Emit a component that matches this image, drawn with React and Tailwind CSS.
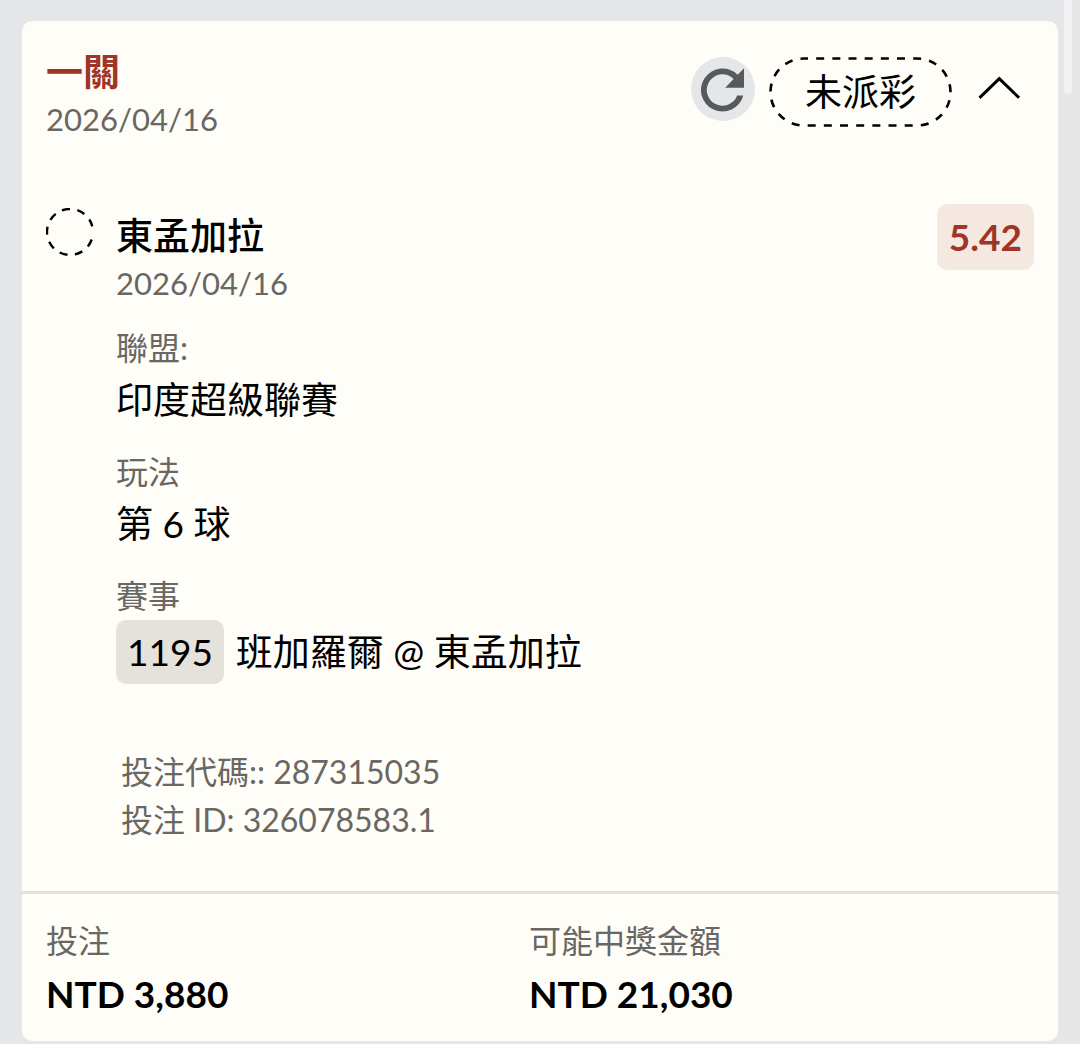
import React, { useState } from "react";

const fields = [
  { label: "聯盟:", value: "印度超級聯賽" },
  { label: "玩法", value: "第 6 球" },
];

const Field = ({ label, children }) => (
  <div className="mb-5">
    <dt className="text-[32px] leading-[48px] text-[#686764]">{label}</dt>
    <dd className="text-[37px] leading-[56px] text-black">{children}</dd>
  </div>
);

const Amount = ({ label, value }) => (
  <div>
    <dt className="text-[32px] leading-[48px] text-[#686764]">{label}</dt>
    <dd className="text-[37px] leading-[58px] font-bold text-black">{value}</dd>
  </div>
);

const App = () => {
  const [open, setOpen] = useState(true);

  return (
    <div className="relative min-h-screen bg-[#e5e6e8] px-[22px] pt-[21px] pb-[3px] font-[Lato,'Noto_Sans_CJK_TC',sans-serif]">
      {/* scrollbar thumb */}
      <div className="absolute top-0 right-2 h-[94px] w-2 rounded-b-full bg-[#f1f1f3]" />

      <article className="overflow-hidden rounded-[10px] bg-[#fffdf7]">
        <header className="flex items-start justify-between px-6 pt-[27px]">
          <div>
            <h1 className="text-[37px] leading-[48px] font-bold text-[#a03527]">一關</h1>
            <time className="block text-[31px] leading-[46px] text-[#686764]">2026/04/16</time>
          </div>
          <div className="flex items-start gap-[14px] pt-[9px]">
            <button
              type="button"
              aria-label="重新整理"
              className="h-16 w-16 rounded-full bg-[#e5e6e8]"
            >
              <svg viewBox="0 0 64 64" className="h-16 w-16" fill="#58595b">
                <path d="M52.3 38.5A21.5 21.5 0 1 1 46.7 17.8L53 11.3V30.7H34.3L42.6 21.9A15.7 15.7 0 1 0 46.2 38.5Z" />
              </svg>
            </button>
            <span className="relative flex h-[70px] w-[183px] items-center justify-center text-[37px] text-black">
              <svg viewBox="0 0 183 70" className="absolute inset-0 h-full w-full" fill="none">
                <rect
                  x="1.5"
                  y="1.5"
                  width="180"
                  height="67"
                  rx="33.5"
                  stroke="#000"
                  strokeWidth="2.6"
                  strokeDasharray="8 8.17"
                  strokeDashoffset="4"
                />
              </svg>
              未派彩
            </span>
            <button
              type="button"
              aria-label="收合"
              aria-expanded={open}
              onClick={() => setOpen(!open)}
              className="flex h-16 w-[68px] items-center justify-center"
            >
              <svg viewBox="0 0 44 26" className="h-[26px] w-11" fill="none">
                <path d="M1.5 21.8 21.3 2.6 41 21.8" stroke="#000" strokeWidth="3" />
              </svg>
            </button>
          </div>
        </header>

        {open && (
          <section className="flex items-start px-6 pt-[62px] pb-[47px]">
            <svg viewBox="0 0 48 48" className="mt-1 mr-[22px] h-12 w-12 shrink-0" fill="none">
              <path
                d="M45.7 31.5A23 23 0 1 1 46.3 18.4"
                stroke="#000"
                strokeWidth="2.4"
                strokeDasharray="8 7.4"
              />
            </svg>
            <div className="grow pt-[6px]">
              <h2 className="text-[37px] leading-[52px] font-medium text-black">東孟加拉</h2>
              <time className="mb-5 block text-[31px] leading-[42px] text-[#686764]">2026/04/16</time>
              <dl>
                {fields.map((f) => (
                  <Field key={f.label} label={f.label}>
                    {f.value}
                  </Field>
                ))}
                <dt className="text-[32px] leading-[48px] text-[#686764]">賽事</dt>
                <dd className="flex items-center gap-3 text-[37px] text-black">
                  <span className="rounded-[10px] bg-[#e5e2dc] px-[11px] leading-[64px]">1195</span>
                  班加羅爾 @ 東孟加拉
                </dd>
              </dl>
              <div className="mt-16 pl-[5px] text-[32px] leading-[48px] text-[#686764]">
                <p>投注代碼:: 287315035</p>
                <p>投注 ID: 326078583.1</p>
              </div>
            </div>
            <span className="rounded-[10px] bg-[#f5e8e1] px-3 text-[37px] leading-[66px] font-bold text-[#a03527]">
              5.42
            </span>
          </section>
        )}

        <dl className="grid grid-cols-[483fr_505fr] border-t-[3px] border-[#e3e1dc] px-6 pt-[23px] pb-[18px]">
          <Amount label="投注" value="NTD 3,880" />
          <Amount label="可能中獎金額" value="NTD 21,030" />
        </dl>
      </article>
    </div>
  );
};

export default App;
